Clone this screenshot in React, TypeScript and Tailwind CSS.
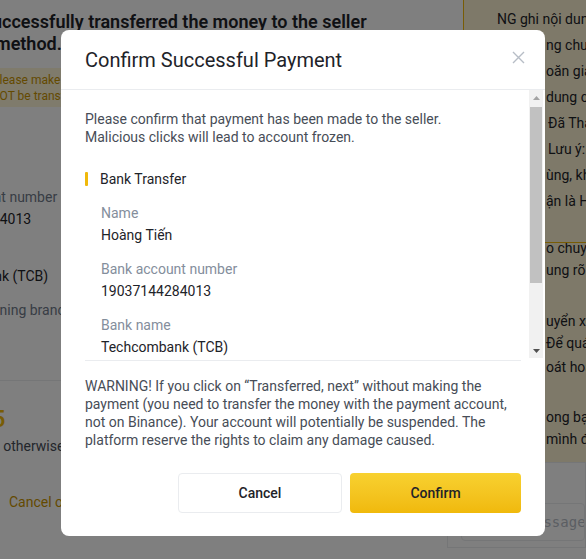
import React from "react";

function Field({ label, value }: { label: string; value: string }) {
  return (
    <div className="mt-[14px]">
      <div className="text-[14px] leading-[20px] text-[#848e9c]">{label}</div>
      <div className="mt-[2px] text-[14px] leading-[20px] text-[#1e2329]">{value}</div>
    </div>
  );
}

export default function App() {
  return (
    <div className="relative w-[586px] h-[559px] overflow-hidden bg-white font-[Roboto,sans-serif]">
      {/* background page */}
      <div className="flex h-full">
        <div className="w-[447px] shrink-0 flex flex-col overflow-hidden">
          <div className="pt-[11px] text-[18px] leading-[22px] font-semibold text-[#1e2329] whitespace-nowrap">
            <div className="-ml-[19px]">Successfully transferred the money to the seller</div>
            <div className="-ml-[5px]">method.</div>
          </div>
          <div className="mt-[13px] bg-[#fef6d8] pt-[4px] pb-[3px] text-[12px] leading-[16px] text-[#c99400] whitespace-nowrap">
            <div className="-ml-[8px]">Please make sure to transfer</div>
            <div className="-ml-[9px]">NOT be transferred</div>
          </div>
          <div className="-ml-[79px] whitespace-nowrap">
            <div className="mt-[80px] text-[14px] leading-[20px] text-[#707a8a]">Bank account number</div>
            <div className="mt-[2px] text-[14px] leading-[20px] text-[#1e2329]">19037144284013</div>
            <div className="mt-[15px] text-[14px] leading-[20px] text-[#707a8a]">Bank name</div>
            <div className="mt-[2px] text-[14px] leading-[20px] text-[#1e2329]">Techcombank (TCB)</div>
            <div className="mt-[14px] text-[14px] leading-[20px] text-[#707a8a]">Account opening branch</div>
            <div className="mt-[2px] text-[14px] leading-[20px] text-[#1e2329]">Hà Nội</div>
          </div>
          <div className="mt-[38px] border-t border-[#eaecef]" />
          <div className="mt-[22px] -ml-[22px] text-[24px] leading-[32px] font-medium text-[#f0b90b] whitespace-nowrap">15</div>
          <div className="mt-[1px] text-[14px] leading-[20px] text-[#474d57] whitespace-nowrap -ml-[3px]">, otherwise the order will be canceled</div>
          <div className="mt-[36px] ml-[9px] text-[14px] leading-[20px] text-[#c99400] whitespace-nowrap">Cancel order</div>
        </div>
        <div className="flex-1 flex flex-col min-w-0">
          <div className="ml-[16px] bg-[#fcf3d3] border-l border-[#f0b90b] h-[462px] flex flex-col text-[14px] text-[#1e2329] whitespace-nowrap overflow-hidden">
            <div className="h-[243px] border-b border-[#f0b90b] overflow-hidden leading-[26px] pt-[6px]">
              <div className="pl-[33px]">NG ghi nội dung chuyển</div>
              <div className="pl-[82px]">ng chuyển</div>
              <div className="pl-[82px]">oăn giao</div>
              <div className="pl-[82px]">dung chuyển</div>
              <div className="pl-[84px]">Đã Thanh toán</div>
              <div className="pl-[84px]">Lưu ý: <span className="text-[#d0343f]">Không</span></div>
              <div className="pl-[82px]">ùng, không</div>
              <div className="pl-[82px]">ận là Hợp lệ</div>
            </div>
            <div className="flex-1 overflow-hidden leading-[22px]">
              <div className="-mt-[6px]">
                <div className="pl-[82px]">o chuyển</div>
                <div className="pl-[82px]">ung rõ ràng</div>
                <div className="pl-[82px] mt-[29px]">uyển xong</div>
                <div className="pl-[82px]">Để quá trình</div>
                <div className="pl-[82px] mt-[2px]">oát hoàn tất</div>
                <div className="pl-[82px] mt-[28px]">ong bạn</div>
                <div className="pl-[82px]">mình đã</div>
              </div>
            </div>
          </div>
          <div className="h-[86px] bg-white border border-[#eaecef] pl-[13px] pt-[40px]">
            <div className="h-[38px] border border-[#eaecef] rounded-[4px] flex items-center pl-[14px] text-[14px] text-[#b7bdc6] font-['DejaVu_Sans_Mono',monospace] whitespace-nowrap overflow-hidden">
              Enter message...
            </div>
          </div>
        </div>
      </div>

      {/* overlay + modal */}
      <div className="absolute inset-0 bg-black/50 pl-[61px] pt-[30px]">
        <div className="w-[484px] h-[506px] bg-white rounded-[8px] flex flex-col">
          <div className="h-[60px] shrink-0 flex items-center justify-between pl-6 pr-[20px] border-b border-[#eaecef]">
            <div className="text-[20px] leading-[28px] text-[#1e2329] pt-[1px]">Confirm Successful Payment</div>
            <svg width="13" height="13" viewBox="0 0 13 13" className="-mt-[5px]">
              <path d="M1 1L12 12M12 1L1 12" stroke="#b7bdc6" strokeWidth="1.4" />
            </svg>
          </div>
          <div className="px-6 flex flex-col">
            <div className="h-[268px] flex -mr-[22px]">
              <div className="w-[436px] shrink-0 overflow-hidden">
                <div className="pt-[20px]">
                  <div className="text-[14px] leading-[18px] text-[#474d57]">
                    Please confirm that payment has been made to the seller.
                    <br />
                    Malicious clicks will lead to account frozen.
                  </div>
                  <div className="mt-[23px] flex items-center text-[14px] leading-[20px] text-[#1e2329]">
                    <span className="w-[3px] h-[14px] bg-[#f0b90b] rounded-[1px]" />
                    <span className="ml-[12px]">Bank Transfer</span>
                  </div>
                  <div className="pl-4">
                    <Field label="Name" value="Hoàng Tiến" />
                    <Field label="Bank account number" value="19037144284013" />
                    <Field label="Bank name" value="Techcombank (TCB)" />
                    <Field label="Account opening branch" value="Hà Nội" />
                  </div>
                </div>
              </div>
              {/* scrollbar */}
              <div className="ml-[8px] w-[14px] h-full bg-[#f1f1f1] flex flex-col">
                <div className="h-[15px] flex items-center justify-center">
                  <svg width="7" height="4" viewBox="0 0 7 4">
                    <path d="M0 4L3.5 0L7 4Z" fill="#a3a3a3" />
                  </svg>
                </div>
                <div className="mt-[2px] mx-[1px] h-[176px] bg-[#c1c1c1]" />
                <div className="flex-1" />
                <div className="h-[15px] flex items-center justify-center">
                  <svg width="7" height="4" viewBox="0 0 7 4">
                    <path d="M0 0L7 0L3.5 4Z" fill="#505050" />
                  </svg>
                </div>
              </div>
            </div>
            <div className="mt-[2px] border-t border-[#eaecef] pt-[16px] pr-[10px] text-[14px] leading-[18px] text-[#474d57]">
              WARNING! If you click on “Transferred, next” without making the payment (you need to transfer the money with the payment account, not on Binance). Your account will potentially be suspended. The platform reserve the rights to claim any damage caused.
            </div>
            <div className="mt-[24px] flex justify-end gap-2">
              <button className="w-[164px] h-[40px] rounded-[4px] border border-[#eaecef] bg-white text-[14px] font-medium text-[#1e2329]">
                Cancel
              </button>
              <button className="w-[171px] h-[40px] rounded-[4px] bg-gradient-to-b from-[#f8d12f] to-[#f0b90b] text-[14px] font-medium text-[#1e2329]">
                Confirm
              </button>
            </div>
          </div>
        </div>
      </div>
    </div>
  );
}
